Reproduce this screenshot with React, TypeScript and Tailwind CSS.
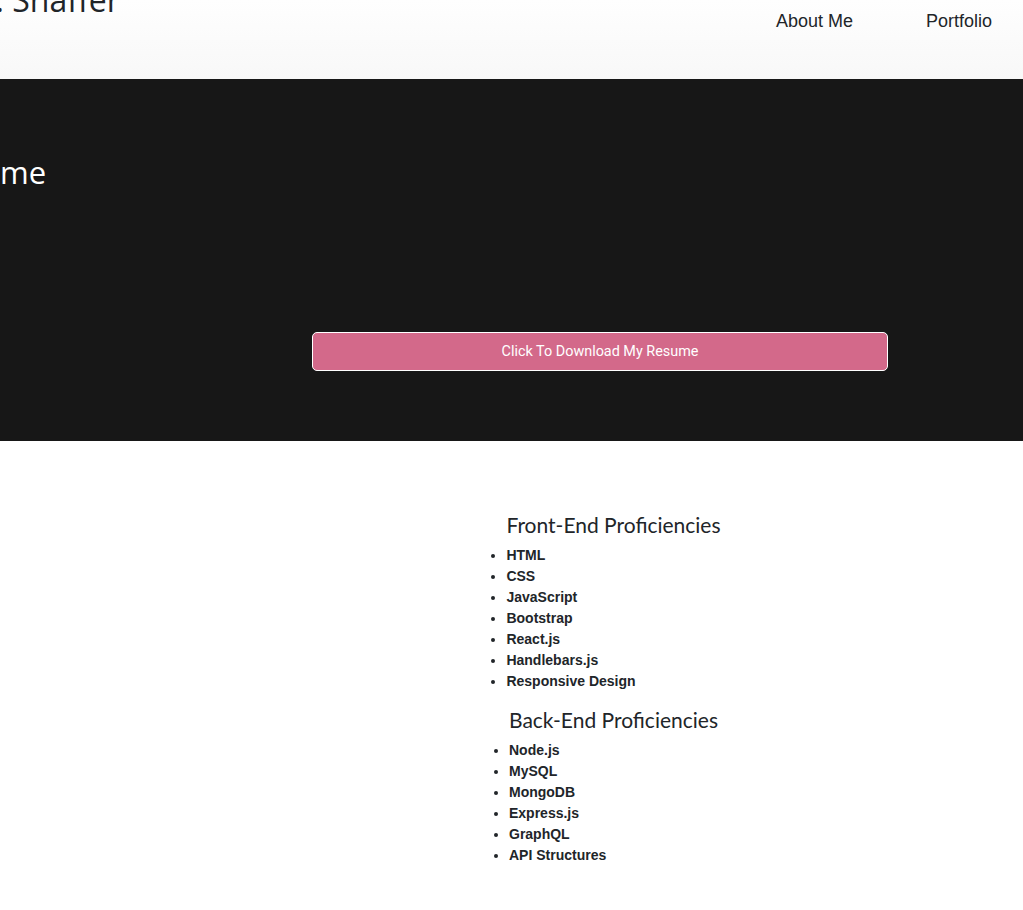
const frontEnd = [
  "HTML",
  "CSS",
  "JavaScript",
  "Bootstrap",
  "React.js",
  "Handlebars.js",
  "Responsive Design",
];

const backEnd = ["Node.js", "MySQL", "MongoDB", "Express.js", "GraphQL", "API Structures"];

function SkillList({ title, items, last }: { title: string; items: string[]; last?: boolean }) {
  return (
    <div className={`w-fit ${last ? "" : "mb-4"}`}>
      <h3 className="font-['Lato',sans-serif] text-[21px] leading-[24px] text-[#212529] mb-2">
        {title}
      </h3>
      <ul className="list-disc list-outside pl-0 font-['Liberation_Sans',Arial,sans-serif] text-[14px] leading-[21px] font-bold text-[#212529]">
        {items.map((item) => (
          <li key={item}>{item}</li>
        ))}
      </ul>
    </div>
  );
}

export default function App() {
  return (
    <div className="w-[1023px] min-h-[910px] bg-white overflow-hidden">
      {/* header */}
      <header className="h-[79px] bg-gradient-to-b from-[#fefefe] to-[#f8f8f8] flex items-start justify-between overflow-hidden">
        <p className="-mt-[24px] -ml-[13px] font-['Open_Sans',sans-serif] text-[32px] text-[#212529]">
          J. Shaffer
        </p>
        <nav className="flex gap-[73px] pr-[31px] pt-[8px] font-['Liberation_Sans',Arial,sans-serif] text-[18px] leading-[26px] text-[#212529]">
          <a>About Me</a>
          <a>Portfolio</a>
        </nav>
      </header>

      {/* hero */}
      <section className="h-[362px] bg-[#171717] pt-[69px] flex flex-col">
        <h2 className="font-['Open_Sans',sans-serif] text-[31px] leading-[48px] text-white">me</h2>
        <div className="mt-[136px] pl-[312px]">
          <button className="w-[576px] h-[39px] bg-[#d3698a] border border-white rounded-[5px] font-['Roboto',sans-serif] text-[14.4px] text-white">
            Click To Download My Resume
          </button>
        </div>
      </section>

      {/* skills */}
      <section className="pt-[72px] pl-[204px] flex flex-col items-center">
        <SkillList title="Front-End Proficiencies" items={frontEnd} />
        <SkillList title="Back-End Proficiencies" items={backEnd} last />
      </section>
    </div>
  );
}
